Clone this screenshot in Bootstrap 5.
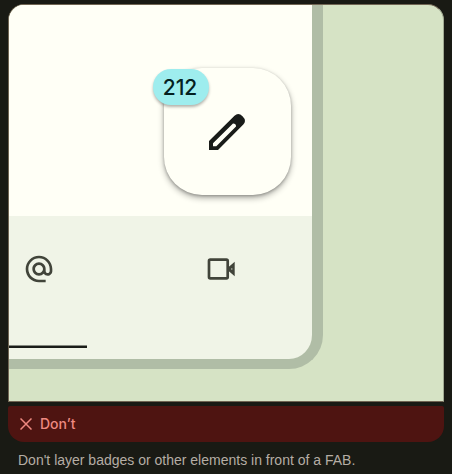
<!DOCTYPE html>
<html lang="en">
<head>
<meta charset="utf-8">
<meta name="viewport" content="width=device-width, initial-scale=1">
<title>FAB guidance</title>
<link href="https://cdn.jsdelivr.net/npm/bootstrap@5.3.0/dist/css/bootstrap.min.css" rel="stylesheet">
<style>
  body { background: #191a14; font-family: Roboto, "Liberation Sans", sans-serif; }
  .guide { padding: 4px 8px 0; }
  .stage { background: #d6e3c5; border: 1px solid #706553; border-right-color: #a1aa92; border-radius: 16px 16px 0 0; padding: 0 120px 32px 0; }
  .device { border: solid #b0bda6; border-width: 0 11px 10px 0; border-radius: 0 0 34px 0; background: #f0f4e7; }
  .screen { background: #fffff6; padding: 63px 21px 21px; }
  .fab { width: 127px; height: 127px; border: 0; border-radius: 38px; background: #fffff6; color: #191c19; box-shadow: 0 3px 6px rgba(0,0,0,.32), 0 1px 3px rgba(0,0,0,.24); }
  .count { left: -11px; top: 1px; height: 36px; width: 56px; border-radius: 18px; background: #9eedee; color: #04201f; font-size: 21px; line-height: 37px; font-weight: 500; padding-right: 2px; box-shadow: 0 2px 3px rgba(0,0,0,.3); font-family: Inter, Roboto, sans-serif; }
  .tabs { height: 143px; }
  .tab-btn { border: 0; background: none; color: #41443a; padding: 0; }
  .tab-first { width: 78px; padding: 37px 0 11px 14px; }
  .tab-first::after { content: ""; width: 78px; height: 3px; margin-left: -14px; background: #1a1c18; border-top: 1px solid #858980; }
  .tab-next { width: 182px; margin-left: 43px; padding-top: 37px; }
  .verdict { margin-top: 4px; height: 36px; padding-left: 12px; border-radius: 2px 2px 16px 16px; background: #4e1411; color: #ee8980; font-family: Inter, Roboto, sans-serif; font-size: 14px; line-height: 20px; font-weight: 500; }
  .note { margin: 8px 10px 0; color: #b5ada4; font-family: "Liberation Sans", Roboto, sans-serif; font-size: 14px; line-height: 20px; }
</style>
</head>
<body>
<figure class="guide m-0">
  <div class="stage overflow-hidden">
    <div class="device overflow-hidden">
      <div class="screen d-flex justify-content-end">
        <button type="button" class="fab position-relative d-flex align-items-center justify-content-center p-0" aria-label="Compose">
          <svg width="37" height="36" viewBox="-1 0 37 36" aria-hidden="true"><path fill="currentColor" fill-rule="evenodd" d="M-1 36V27L24.500 1.700Q28.500-1.800 32.500 2.300Q37 6.600 33.300 10.500L8 36ZM3 32.200H6.300L26 12.500Q26.200 9.300 23 9.400L3 29.300Z"/></svg>
          <span class="count position-absolute text-center">212</span>
        </button>
      </div>
      <nav class="tabs d-flex align-items-stretch overflow-hidden">
        <button type="button" class="tab-btn tab-first d-flex flex-column justify-content-between flex-shrink-0" aria-label="Mentions">
          <svg width="32" height="32" viewBox="0 0 24 24" fill="currentColor" aria-hidden="true"><path d="M12 2C6.480 2 2 6.480 2 12s4.480 10 10 10h5v-2h-5c-4.340 0-8-3.660-8-8s3.660-8 8-8 8 3.660 8 8v1.430c0 .79-.71 1.570-1.500 1.570s-1.500-.78-1.500-1.570V12c0-2.760-2.240-5-5-5s-5 2.240-5 5 2.240 5 5 5c1.380 0 2.640-.56 3.540-1.470.65.89 1.770 1.470 2.960 1.470 1.970 0 3.500-1.600 3.500-3.570V12c0-5.520-4.480-10-10-10zm0 13c-1.660 0-3-1.340-3-3s1.340-3 3-3 3 1.340 3 3-1.340 3-3 3z"/></svg>
        </button>
        <button type="button" class="tab-btn tab-next d-flex justify-content-center align-items-start flex-shrink-0" aria-label="Meet">
          <svg width="32" height="32" viewBox="0 0 32 32" aria-hidden="true"><rect x="4" y="6.600" width="18.700" height="18.700" rx="1.300" fill="none" stroke="currentColor" stroke-width="2.700"/><path fill="currentColor" fill-rule="evenodd" d="M23 14.500 29.700 8.800V23.200L23 17.500ZM26 16 27.200 17V15Z"/></svg>
        </button>
      </nav>
    </div>
  </div>
  <div class="verdict d-flex align-items-center gap-2">
    <svg width="12" height="12" viewBox="0 0 12 12" aria-hidden="true"><path d="M.5.5 11.500 11.500M11.500.5.5 11.500" stroke="currentColor" stroke-width="1.500"/></svg>
    <span>Don’t</span>
  </div>
  <figcaption class="note">Don't layer badges or other elements in front of a FAB.</figcaption>
</figure>
<script src="https://cdn.jsdelivr.net/npm/bootstrap@5.3.0/dist/js/bootstrap.bundle.min.js"></script>
</body>
</html>
